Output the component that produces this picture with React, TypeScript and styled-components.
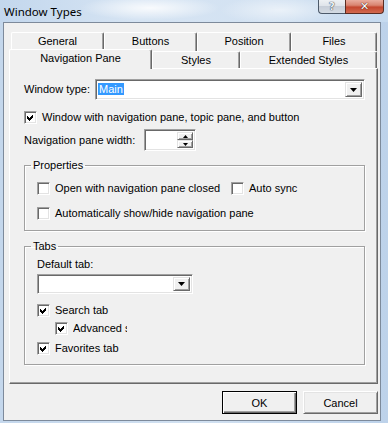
import React from "react";
import styled, { createGlobalStyle } from "styled-components";

const GlobalStyle = createGlobalStyle`
  html, body { margin: 0; padding: 0; }
  body { background: #bfd4eb; font-family: "Liberation Sans", Arial, sans-serif; }
`;

const Window = styled.div`
  width: 388px;
  height: 423px;
  overflow: hidden;
  display: flex;
  flex-direction: column;
  background: linear-gradient(90deg, #c4d7ec 0%, #d2e1f1 50%, #bdd2ea 100%);
`;

const TitleBar = styled.div`
  height: 22px;
  flex: none;
  display: flex;
  align-items: flex-start;
  background:
    radial-gradient(ellipse 70px 12px at 150px 8px, rgba(255,255,255,0.85), rgba(255,255,255,0)),
    radial-gradient(ellipse 60px 14px at 280px 10px, rgba(255,255,255,0.55), rgba(255,255,255,0)),
    linear-gradient(90deg, #c3d7ed 0%, #d6e4f3 35%, #d3e2f2 70%, #c6daef 100%);
`;

const Title = styled.div`
  margin: 4px 0 0 4px;
  font-family: "Noto Sans", "Open Sans", sans-serif;
  font-size: 11.5px;
  line-height: 15px;
  color: #000;
`;

const Caption = styled.div`
  margin-left: auto;
  margin-right: 4px;
  display: flex;
`;

const HelpBtn = styled.div`
  width: 27px;
  height: 14px;
  box-sizing: border-box;
  border: 1px solid #4d5a6a;
  border-top: none;
  border-right: none;
  border-bottom-left-radius: 4px;
  background: linear-gradient(180deg, #eef1f4 0%, #dfe4ea 45%, #c7ced8 50%, #d4dbe3 100%);
  display: flex;
  align-items: center;
  justify-content: center;
  font-family: "DejaVu Sans", sans-serif;
  font-weight: bold;
  font-size: 10px;
  line-height: 12px;
  color: #eef2f6;
  text-shadow: 0 0 1px #2f3a48, 0 0 1px #2f3a48;
`;

const CloseBtn = styled.div`
  width: 39px;
  height: 14px;
  box-sizing: border-box;
  border: 1px solid #5a2c22;
  border-top: none;
  border-bottom-right-radius: 4px;
  background: linear-gradient(180deg, #e9ad9f 0%, #d98571 40%, #c4472f 55%, #d26a4f 100%);
  display: flex;
  align-items: center;
  justify-content: center;
  font-family: "DejaVu Sans", sans-serif;
  font-weight: bold;
  font-size: 11px;
  line-height: 12px;
  color: #fff;
  text-shadow: 0 0 1px #4a1a10, 0 0 1px #4a1a10;
`;

const Client = styled.div`
  margin: 0 7px 0 3px;
  height: 399px;
  box-sizing: border-box;
  border: 1px solid #7d8a9b;
  background: #f0f0f0;
  display: flex;
  flex-direction: column;
  color: #000;
  font-size: 11px;
`;

const TabArea = styled.div`
  margin: 9px 0 0 5px;
`;

const TabRow = styled.div<{ $front?: boolean }>`
  display: flex;
  height: ${(p) => (p.$front ? 17 : 19)}px;
  padding-left: ${(p) => (p.$front ? 0 : 2)}px;
`;

const Tab = styled.div<{ $w: number; $selected?: boolean; $front?: boolean }>`
  width: ${(p) => p.$w}px;
  height: ${(p) => (p.$selected ? 20 : p.$front ? 17 : 19)}px;
  margin-top: ${(p) => (p.$selected ? -2 : 0)}px;
  position: relative;
  z-index: ${(p) => (p.$selected ? 2 : 1)};
  box-sizing: border-box;
  border-left: 1px solid #fff;
  border-top: 1px solid #fff;
  border-right: 1px solid #696969;
  box-shadow: inset -1px 0 #a0a0a0;
  border-radius: 2px 2px 0 0;
  background: #f0f0f0;
  text-align: center;
  padding-top: 2px;
  line-height: 13px;
  white-space: nowrap;
`;

const Panel = styled.div`
  margin-left: 5px;
  width: 369px;
  height: 316px;
  box-sizing: border-box;
  border-top: 1px solid #fff;
  border-left: 1px solid #fff;
  border-right: 1px solid #696969;
  border-bottom: 1px solid #696969;
  box-shadow: inset -1px -1px #a0a0a0;
  padding: 10px 0 0 14px;
  display: flex;
  flex-direction: column;
`;

const Row = styled.div<{ $mt?: number; $ml?: number }>`
  display: flex;
  align-items: center;
  margin-top: ${(p) => p.$mt ?? 0}px;
  margin-left: ${(p) => p.$ml ?? 0}px;
`;

const Label = styled.div<{ $w?: number }>`
  width: ${(p) => (p.$w ? `${p.$w}px` : "auto")};
  flex: none;
  line-height: 13px;
  white-space: nowrap;
`;

const Sunken = styled.div<{ $w: number; $h: number }>`
  width: ${(p) => p.$w}px;
  height: ${(p) => p.$h}px;
  flex: none;
  box-sizing: border-box;
  border: 1px solid;
  border-color: #a0a0a0 #fff #fff #a0a0a0;
  box-shadow: inset 1px 1px #696969, inset -1px -1px #e3e3e3;
  background: #fff;
  padding: 2px;
  display: flex;
`;

const FieldText = styled.div`
  flex: 1;
  line-height: 13px;
  padding-top: 1px;
`;

const Selected = styled.span`
  background: #3399ff;
  color: #fff;
  padding: 0 1px;
`;

const RaisedBtn = styled.div<{ $w: number; $fill?: boolean }>`
  width: ${(p) => p.$w}px;
  flex: ${(p) => (p.$fill ? "1 1 0" : "none")};
  box-sizing: border-box;
  background: #f0f0f0;
  border: 1px solid;
  border-color: #e3e3e3 #696969 #696969 #e3e3e3;
  box-shadow: inset 1px 1px #fff, inset -1px -1px #a0a0a0;
  display: flex;
  align-items: center;
  justify-content: center;
`;

const SpinCol = styled.div`
  display: flex;
  flex-direction: column;
  width: 16px;
`;

const Box = styled.span`
  width: 13px;
  height: 13px;
  flex: none;
  box-sizing: border-box;
  border: 1px solid;
  border-color: #a0a0a0 #fff #fff #a0a0a0;
  box-shadow: inset 1px 1px #696969, inset -1px -1px #e3e3e3;
  background: #fff;
  display: flex;
  align-items: center;
  justify-content: center;
`;

const CheckItem = styled.div<{ $w?: number }>`
  display: flex;
  align-items: center;
  gap: 5px;
  width: ${(p) => (p.$w ? `${p.$w}px` : "auto")};
  flex: none;
`;

const ClipLabel = styled(Label)`
  overflow: hidden;
`;

const Group = styled.fieldset<{ $h: number; $mt: number }>`
  margin: ${(p) => p.$mt}px 0 0 0;
  width: 341px;
  height: ${(p) => p.$h}px;
  box-sizing: border-box;
  border: 1px solid #a0a0a0;
  box-shadow: 1px 1px 0 #fff, inset 1px 1px 0 #fff;
  padding: 0;
  min-inline-size: 0;
`;

const Legend = styled.legend`
  margin-left: 6px;
  padding: 0 2px;
  line-height: 13px;
  font-size: 11px;
`;

const GroupBody = styled.div`
  padding-left: 12px;
  display: flex;
  flex-direction: column;
`;

const ButtonRow = styled.div`
  display: flex;
  justify-content: flex-end;
  gap: 6px;
  margin-top: 7px;
  padding-right: 2px;
`;

const PushButton = styled.button<{ $default?: boolean }>`
  width: 75px;
  height: 23px;
  box-sizing: border-box;
  background: #f0f0f0;
  font-family: "Liberation Sans", Arial, sans-serif;
  font-size: 11px;
  color: #000;
  padding: 0;
  border: 1px solid;
  border-color: ${(p) => (p.$default ? "#000" : "#fff #696969 #696969 #fff")};
  box-shadow: ${(p) =>
    p.$default
      ? "inset 1px 1px #fff, inset -1px -1px #696969, inset -2px -2px #a0a0a0"
      : "inset 1px 1px #e3e3e3, inset -1px -1px #a0a0a0"};
`;

const Arrow = ({ up, size = 7 }: { up?: boolean; size?: number }) => {
  const h = Math.ceil(size / 2);
  return (
    <svg width={size} height={h} viewBox={`0 0 ${size} ${h}`}>
      <polygon
        points={up ? `${size / 2},0 ${size},${h} 0,${h}` : `0,0 ${size},0 ${size / 2},${h}`}
        fill="#000"
      />
    </svg>
  );
};

const CheckMark = () => (
  <svg width="9" height="9" viewBox="0 0 9 9" shapeRendering="crispEdges">
    <polygon points="1,3 3,5 7,1 7,4 3,8 1,6" fill="#000" />
  </svg>
);

const Check = ({ checked }: { checked?: boolean }) => <Box>{checked && <CheckMark />}</Box>;

const Combo = ({ w, h, children }: { w: number; h: number; children?: React.ReactNode }) => (
  <Sunken $w={w} $h={h}>
    <FieldText>{children}</FieldText>
    <RaisedBtn $w={17}>
      <Arrow />
    </RaisedBtn>
  </Sunken>
);

export default function App() {
  return (
    <>
      <GlobalStyle />
      <Window>
        <TitleBar>
          <Title>Window Types</Title>
          <Caption>
            <HelpBtn>?</HelpBtn>
            <CloseBtn>✕</CloseBtn>
          </Caption>
        </TitleBar>
        <Client>
          <TabArea>
            <TabRow>
              <Tab $w={93}>General</Tab>
              <Tab $w={93}>Buttons</Tab>
              <Tab $w={94}>Position</Tab>
              <Tab $w={86}>Files</Tab>
            </TabRow>
            <TabRow $front>
              <Tab $w={143} $front $selected>
                Navigation Pane
              </Tab>
              <Tab $w={88} $front>
                Styles
              </Tab>
              <Tab $w={137} $front>
                Extended Styles
              </Tab>
            </TabRow>
          </TabArea>
          <Panel>
            <Row>
              <Label $w={71}>Window type:</Label>
              <Combo w={270} h={21}>
                <Selected>Main</Selected>
              </Combo>
            </Row>
            <Row $mt={11}>
              <CheckItem>
                <Check checked />
                <Label>Window with navigation pane, topic pane, and button</Label>
              </CheckItem>
            </Row>
            <Row $mt={5}>
              <Label $w={120}>Navigation pane width:</Label>
              <Sunken $w={52} $h={22}>
                <FieldText />
                <SpinCol>
                  <RaisedBtn $w={16} $fill>
                    <Arrow up size={5} />
                  </RaisedBtn>
                  <RaisedBtn $w={16} $fill>
                    <Arrow size={5} />
                  </RaisedBtn>
                </SpinCol>
              </Sunken>
            </Row>
            <Group $h={72} $mt={8}>
              <Legend>Properties</Legend>
              <GroupBody>
                <Row $mt={10}>
                  <CheckItem $w={194}>
                    <Check />
                    <Label>Open with navigation pane closed</Label>
                  </CheckItem>
                  <CheckItem>
                    <Check />
                    <Label>Auto sync</Label>
                  </CheckItem>
                </Row>
                <Row $mt={12}>
                  <CheckItem>
                    <Check />
                    <Label>Automatically show/hide navigation pane</Label>
                  </CheckItem>
                </Row>
              </GroupBody>
            </Group>
            <Group $h={125} $mt={9}>
              <Legend>Tabs</Legend>
              <GroupBody>
                <Row $mt={5}>
                  <Label>Default tab:</Label>
                </Row>
                <Row $mt={3}>
                  <Combo w={156} h={20} />
                </Row>
                <Row $mt={10}>
                  <CheckItem>
                    <Check checked />
                    <Label>Search tab</Label>
                  </CheckItem>
                </Row>
                <Row $mt={5} $ml={18}>
                  <CheckItem>
                    <Check checked />
                    <ClipLabel $w={54}>Advanced search</ClipLabel>
                  </CheckItem>
                </Row>
                <Row $mt={7}>
                  <CheckItem>
                    <Check checked />
                    <Label>Favorites tab</Label>
                  </CheckItem>
                </Row>
              </GroupBody>
            </Group>
          </Panel>
          <ButtonRow>
            <PushButton $default>OK</PushButton>
            <PushButton>Cancel</PushButton>
          </ButtonRow>
        </Client>
      </Window>
    </>
  );
}
